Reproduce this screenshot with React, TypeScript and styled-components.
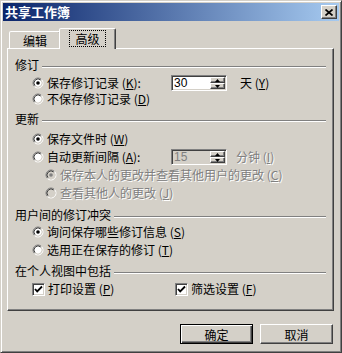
import React from 'react';
import styled, { createGlobalStyle, css } from 'styled-components';

const face = '#d4d0c8';
const shadow = '#808080';
const dark = '#404040';
const font = '"Noto Sans CJK SC", "Liberation Sans", sans-serif';

const GlobalStyle = createGlobalStyle`
  html, body {
    margin: 0;
    padding: 0;
    background: ${face};
  }
  body {
    font-family: ${font};
    font-size: 12px;
    color: #000;
  }
`;

const sunken = css`
  border: 1px solid;
  border-color: ${shadow} #fff #fff ${shadow};
  box-shadow: inset 1px 1px ${dark}, inset -1px -1px ${face};
`;

const raised = css`
  border: 1px solid;
  border-color: #fff ${dark} ${dark} #fff;
  box-shadow: inset -1px -1px ${shadow};
`;

const Window = styled.div`
  width: 342px;
  height: 353px;
  box-sizing: border-box;
  background: ${face};
  border: 1px solid;
  border-color: ${face} ${dark} ${dark} ${face};
  box-shadow: inset 1px 1px #fff, inset -1px -1px ${shadow};
  padding: 2px;
  display: flex;
  flex-direction: column;
`;

const TitleBar = styled.div`
  height: 18px;
  display: flex;
  align-items: center;
  justify-content: space-between;
  padding: 0 2px 0 2px;
  background: linear-gradient(to right, #0a246a, #a6caf0);
`;

const Title = styled.span`
  color: #fff;
  font-weight: bold;
  font-size: 13px;
  line-height: 18px;
`;

const CloseButton = styled.div`
  width: 16px;
  height: 14px;
  box-sizing: border-box;
  background: ${face};
  ${raised};
  display: flex;
  align-items: center;
  justify-content: center;
`;

const Body = styled.div`
  padding: 7px 5px 0 4px;
  display: flex;
  flex-direction: column;
`;

const TabRow = styled.div`
  height: 20px;
  display: flex;
  align-items: flex-end;
  padding-left: 2px;
`;

const Tab = styled.div<{ $active?: boolean; $w: number }>`
  position: relative;
  box-sizing: border-box;
  width: ${({ $w }) => $w}px;
  height: ${({ $active }) => ($active ? 21 : 17)}px;
  margin-left: ${({ $active }) => ($active ? -2 : 0)}px;
  margin-bottom: ${({ $active }) => ($active ? -1 : 0)}px;
  z-index: ${({ $active }) => ($active ? 1 : 0)};
  background: ${face};
  border-style: solid;
  border-color: #fff ${dark} transparent #fff;
  border-width: 1px 1px 0 1px;
  border-top-left-radius: 2px;
  border-top-right-radius: 2px;
  box-shadow: inset -1px 0 ${shadow};
  display: flex;
  align-items: center;
  justify-content: center;
  padding-bottom: ${({ $active }) => ($active ? 2 : 0)}px;
`;

const TabLabel = styled.span<{ $focus?: boolean }>`
  font-size: 12px;
  line-height: 13px;
  padding: 1px 5px;
  border: 1px dotted ${({ $focus }) => ($focus ? '#000' : 'transparent')};
`;

const Panel = styled.div`
  height: 263px;
  box-sizing: border-box;
  background: ${face};
  ${raised};
  padding: 9px 7px 0 7px;
  display: flex;
  flex-direction: column;
`;

const GroupBox = styled.div<{ $mt: number }>`
  margin-top: ${({ $mt }) => $mt}px;
  display: flex;
  flex-direction: column;
`;

const GroupHeader = styled.div`
  height: 14px;
  display: flex;
  align-items: center;
  gap: 3px;
`;

const GroupTitle = styled.span`
  line-height: 14px;
  white-space: nowrap;
`;

const Etch = styled.div`
  flex: 1;
  height: 0;
  margin-top: 4px;
  border-top: 1px solid ${shadow};
  border-bottom: 1px solid #fff;
`;

const Rows = styled.div<{ $mt: number }>`
  margin-top: ${({ $mt }) => $mt}px;
  display: flex;
  flex-direction: column;
`;

const Row = styled.div<{ $h: number }>`
  height: ${({ $h }) => $h}px;
  display: flex;
  align-items: center;
  padding-left: 17px;
`;

const Option = styled.div<{ $w?: number; $indent?: number }>`
  display: flex;
  align-items: center;
  gap: 3px;
  width: ${({ $w }) => ($w ? `${$w}px` : 'auto')};
  margin-left: ${({ $indent }) => $indent || 0}px;
  white-space: nowrap;
`;

const Label = styled.span<{ $disabled?: boolean }>`
  line-height: 14px;
  color: ${({ $disabled }) => ($disabled ? shadow : '#000')};
  text-shadow: ${({ $disabled }) => ($disabled ? '1px 1px 0 #fff' : 'none')};
`;

const Key = styled.span`
  text-decoration: underline;
`;

const Spin = styled.div<{ $disabled?: boolean }>`
  width: 56px;
  height: 16px;
  box-sizing: border-box;
  ${sunken};
  background: ${({ $disabled }) => ($disabled ? face : '#fff')};
  display: flex;
  padding: 1px;
`;

const SpinValue = styled.span<{ $disabled?: boolean }>`
  flex: 1;
  font-family: "Liberation Sans", sans-serif;
  font-size: 12px;
  line-height: 12px;
  padding-left: 1px;
  color: ${({ $disabled }) => ($disabled ? shadow : '#000')};
`;

const SpinButtons = styled.div`
  width: 15px;
  display: flex;
  flex-direction: column;
`;

const SpinButton = styled.div`
  flex: 1;
  box-sizing: border-box;
  background: ${face};
  ${raised};
  display: flex;
  align-items: center;
  justify-content: center;
`;

const Unit = styled.span<{ $ml: number; $disabled?: boolean }>`
  margin-left: ${({ $ml }) => $ml}px;
  line-height: 14px;
  white-space: nowrap;
  color: ${({ $disabled }) => ($disabled ? shadow : '#000')};
  text-shadow: ${({ $disabled }) => ($disabled ? '1px 1px 0 #fff' : 'none')};
`;

const CheckBox = styled.div`
  width: 13px;
  height: 13px;
  box-sizing: border-box;
  ${sunken};
  background: #fff;
  display: flex;
  align-items: center;
  justify-content: center;
`;

const ButtonRow = styled.div`
  margin-top: 13px;
  display: flex;
  justify-content: flex-end;
  gap: 7px;
  padding-right: 1px;
`;

const Button = styled.div<{ $default?: boolean }>`
  width: 73px;
  height: 20px;
  box-sizing: border-box;
  background: ${face};
  border: 1px solid;
  border-color: ${({ $default }) => ($default ? '#000' : `#fff ${dark} ${dark} #fff`)};
  box-shadow: ${({ $default }) =>
    $default
      ? `inset 1px 1px #fff, inset -1px -1px ${dark}, inset -2px -2px ${shadow}`
      : `inset -1px -1px ${shadow}`};
  display: flex;
  align-items: center;
  justify-content: center;
  font-size: 12px;
`;

const Radio = ({ checked, disabled }: { checked?: boolean; disabled?: boolean }) => (
  <svg width="12" height="12" viewBox="0 0 12 12">
    <circle cx="6" cy="6" r="4" fill={disabled ? face : '#fff'} />
    <path d="M2.46 9.54 A5 5 0 0 1 9.54 2.46" fill="none" stroke={shadow} />
    <path d="M9.54 2.46 A5 5 0 0 1 2.46 9.54" fill="none" stroke="#fff" />
    <path d="M3.17 8.83 A4 4 0 0 1 8.83 3.17" fill="none" stroke={dark} />
    <path d="M8.83 3.17 A4 4 0 0 1 3.17 8.83" fill="none" stroke={face} />
    {checked && <circle cx="6" cy="6" r="1.8" fill={disabled ? shadow : '#000'} />}
  </svg>
);

const Check = () => (
  <svg width="9" height="9" viewBox="0 0 9 9">
    <polyline points="1,4 3.2,6.4 8,1.5" fill="none" stroke="#000" strokeWidth="1.8" />
  </svg>
);

const Arrow = ({ up }: { up?: boolean }) => (
  <svg width="5" height="3" viewBox="0 0 5 3">
    <polygon points={up ? '2.5,0 5,3 0,3' : '0,0 5,0 2.5,3'} fill="#000" />
  </svg>
);

const SpinBox = ({ value, disabled }: { value: string; disabled?: boolean }) => (
  <Spin $disabled={disabled}>
    <SpinValue $disabled={disabled}>{value}</SpinValue>
    <SpinButtons>
      <SpinButton><Arrow up /></SpinButton>
      <SpinButton><Arrow /></SpinButton>
    </SpinButtons>
  </Spin>
);

const Group = ({ title, mt, rowsMt, children }) => (
  <GroupBox $mt={mt}>
    <GroupHeader>
      <GroupTitle>{title}</GroupTitle>
      <Etch />
    </GroupHeader>
    <Rows $mt={rowsMt}>{children}</Rows>
  </GroupBox>
);

export default function App() {
  return (
    <>
      <GlobalStyle />
      <Window>
        <TitleBar>
          <Title>共享工作簿</Title>
          <CloseButton>
            <svg width="8" height="7" viewBox="0 0 8 7">
              <path d="M0.5 0.5 L7.5 6.5 M7.5 0.5 L0.5 6.5" stroke="#000" strokeWidth="1.7" />
            </svg>
          </CloseButton>
        </TitleBar>
        <Body>
          <TabRow>
            <Tab $w={52}><TabLabel>编辑</TabLabel></Tab>
            <Tab $w={57} $active><TabLabel $focus>高级</TabLabel></Tab>
          </TabRow>
          <Panel>
            <Group title="修订" mt={0} rowsMt={3}>
              <Row $h={16}>
                <Option $w={139}>
                  <Radio checked />
                  <Label>保存修订记录 (<Key>K</Key>):</Label>
                </Option>
                <SpinBox value="30" />
                <Unit $ml={13}>天 (<Key>Y</Key>)</Unit>
              </Row>
              <Row $h={16}>
                <Option>
                  <Radio />
                  <Label>不保存修订记录 (<Key>D</Key>)</Label>
                </Option>
              </Row>
            </Group>
            <Group title="更新" mt={5} rowsMt={4}>
              <Row $h={18}>
                <Option>
                  <Radio checked />
                  <Label>保存文件时 (<Key>W</Key>)</Label>
                </Option>
              </Row>
              <Row $h={18}>
                <Option $w={139}>
                  <Radio />
                  <Label>自动更新间隔 (<Key>A</Key>):</Label>
                </Option>
                <SpinBox value="15" disabled />
                <Unit $ml={9} $disabled>分钟 (<Key>I</Key>)</Unit>
              </Row>
              <Row $h={18}>
                <Option $indent={13}>
                  <Radio checked disabled />
                  <Label $disabled>保存本人的更改并查看其他用户的更改 (<Key>C</Key>)</Label>
                </Option>
              </Row>
              <Row $h={18}>
                <Option $indent={13}>
                  <Radio disabled />
                  <Label $disabled>查看其他人的更改 (<Key>J</Key>)</Label>
                </Option>
              </Row>
            </Group>
            <Group title="用户间的修订冲突" mt={6} rowsMt={1}>
              <Row $h={18}>
                <Option>
                  <Radio checked />
                  <Label>询问保存哪些修订信息 (<Key>S</Key>)</Label>
                </Option>
              </Row>
              <Row $h={18}>
                <Option>
                  <Radio />
                  <Label>选用正在保存的修订 (<Key>T</Key>)</Label>
                </Option>
              </Row>
            </Group>
            <Group title="在个人视图中包括" mt={5} rowsMt={3}>
              <Row $h={16}>
                <Option $w={143}>
                  <CheckBox><Check /></CheckBox>
                  <Label>打印设置 (<Key>P</Key>)</Label>
                </Option>
                <Option>
                  <CheckBox><Check /></CheckBox>
                  <Label>筛选设置 (<Key>F</Key>)</Label>
                </Option>
              </Row>
            </Group>
          </Panel>
          <ButtonRow>
            <Button $default>确定</Button>
            <Button>取消</Button>
          </ButtonRow>
        </Body>
      </Window>
    </>
  );
}
